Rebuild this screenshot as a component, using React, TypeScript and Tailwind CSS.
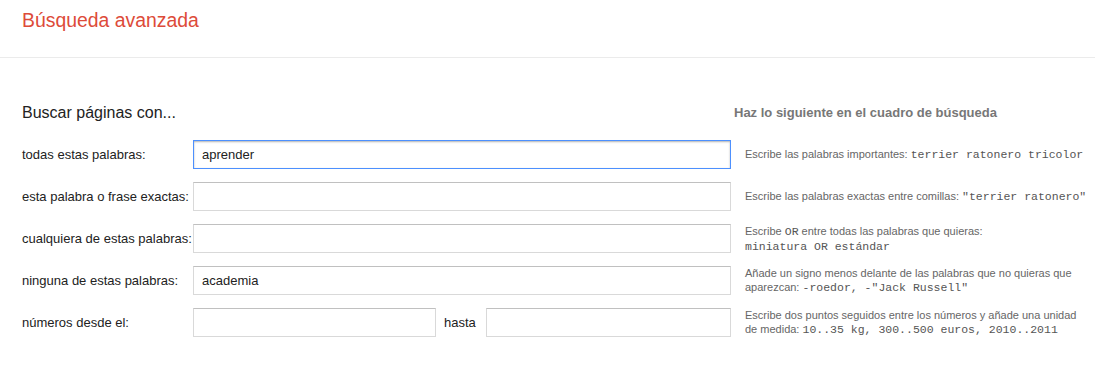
import React from "react";

const inputBase =
  "h-[29px] border bg-white px-[8px] text-[13px] text-[#222] outline-none";
const inputIdle = "border-[#d9d9d9] border-t-[#c0c0c0]";
const inputFocus = "border-[#4d90fe] shadow-[inset_0_1px_2px_rgba(0,0,0,0.3)]";

interface RowProps {
  label: string;
  value?: string;
  focused?: boolean;
  help: React.ReactNode;
  children?: React.ReactNode;
}

const Mono: React.FC<{ children: React.ReactNode }> = ({ children }) => (
  <span className="font-['Liberation_Mono',monospace] text-[11.5px] text-[#555]">{children}</span>
);

const Row: React.FC<RowProps> = ({ label, value, focused, help, children }) => (
  <div className="flex items-center h-[29px] mb-[13px]">
    <label className="w-[171px] shrink-0 text-[13px] text-[#222] whitespace-nowrap">{label}</label>
    <div className="w-[538px] shrink-0 flex items-center">
      {children ?? (
        <input
          readOnly
          value={value ?? ""}
          className={`${inputBase} w-full ${focused ? inputFocus : inputIdle}`}
        />
      )}
    </div>
    <div className="ml-[14px] text-[11px] leading-[14px] text-[#666]">{help}</div>
  </div>
);

export default function App() {
  return (
    <div className="w-[1095px] h-[365px] bg-white font-['Liberation_Sans',Arial,sans-serif] overflow-hidden">
      <div className="h-[58px] border-b border-[#ebebeb] pl-[22px] pt-[8px]">
        <h1 className="text-[19.4px] leading-[24px] text-[#dd4b39]">Búsqueda avanzada</h1>
      </div>
      <div className="pl-[22px] pt-[45px]">
        <div className="flex items-center h-[20px] mb-[17px]">
          <h2 className="w-[712px] shrink-0 text-[16px] text-[#222]">Buscar páginas con...</h2>
          <h3 className="text-[13px] font-bold text-[#777]">Haz lo siguiente en el cuadro de búsqueda</h3>
        </div>
        <Row
          label="todas estas palabras:"
          value="aprender"
          focused
          help={
            <>
              Escribe las palabras importantes: <Mono>terrier ratonero tricolor</Mono>
            </>
          }
        />
        <Row
          label="esta palabra o frase exactas:"
          help={
            <>
              Escribe las palabras exactas entre comillas: <Mono>"terrier ratonero"</Mono>
            </>
          }
        />
        <Row
          label="cualquiera de estas palabras:"
          help={
            <>
              Escribe <Mono>OR</Mono> entre todas las palabras que quieras:
              <br />
              <Mono>miniatura OR estándar</Mono>
            </>
          }
        />
        <Row
          label="ninguna de estas palabras:"
          value="academia"
          help={
            <>
              Añade un signo menos delante de las palabras que no quieras que
              <br />
              aparezcan: <Mono>-roedor, -"Jack Russell"</Mono>
            </>
          }
        />
        <Row
          label="números desde el:"
          help={
            <>
              Escribe dos puntos seguidos entre los números y añade una unidad
              <br />
              de medida: <Mono>10..35 kg, 300..500 euros, 2010..2011</Mono>
            </>
          }
        >
          <input readOnly value="" className={`${inputBase} ${inputIdle} w-[243px]`} />
          <span className="w-[50px] shrink-0 pl-[8px] text-[13px] text-[#222]">hasta</span>
          <input readOnly value="" className={`${inputBase} ${inputIdle} flex-1 min-w-0`} />
        </Row>
      </div>
    </div>
  );
}
